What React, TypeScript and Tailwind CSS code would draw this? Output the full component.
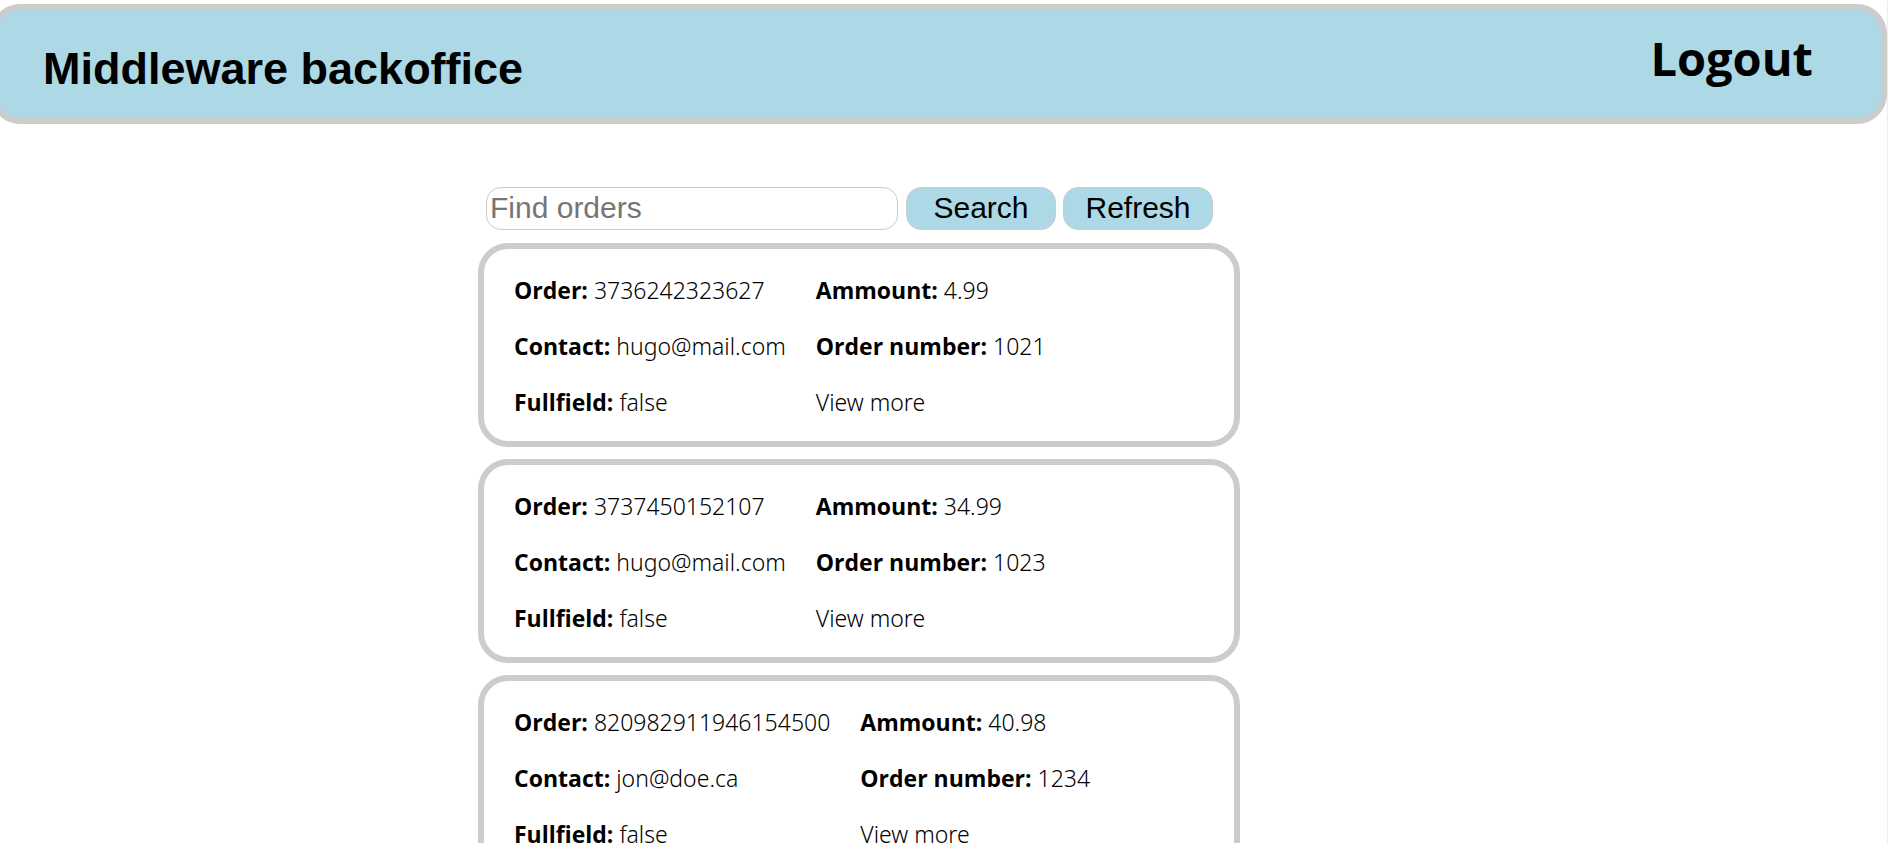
type Order = {
  id: string;
  contact: string;
  fulfilled: boolean;
  amount: string;
  number: string;
};

const orders: Order[] = [
  { id: '3736242323627', contact: 'hugo@mail.com', fulfilled: false, amount: '4.99', number: '1021' },
  { id: '3737450152107', contact: 'hugo@mail.com', fulfilled: false, amount: '34.99', number: '1023' },
  { id: '820982911946154500', contact: 'jon@doe.ca', fulfilled: false, amount: '40.98', number: '1234' },
];

function Field({ label, value }: { label: string; value: string }) {
  return (
    <p>
      <strong className='font-["Open_Sans",sans-serif] font-bold'>{label}:</strong> {value}
    </p>
  );
}

function OrderCard({ order }: { order: Order }) {
  return (
    <li className='flex gap-[30px] rounded-[30px] border-6 border-[#ccc] px-[30px] pt-[13px] pb-[11px] font-["Noto_Sans",sans-serif] text-[23px] leading-[56px] font-light whitespace-nowrap'>
      <div>
        <Field label="Order" value={order.id} />
        <Field label="Contact" value={order.contact} />
        <Field label="Fullfield" value={String(order.fulfilled)} />
      </div>
      <div>
        <Field label="Ammount" value={order.amount} />
        <Field label="Order number" value={order.number} />
        <a href="#order" className="block">View more</a>
      </div>
    </li>
  );
}

const buttonClass =
  'h-[43px] w-[150px] rounded-[15px] border border-[#ccc] bg-[#add8e6] pb-0.5 font-["Liberation_Sans",sans-serif] text-[30px] leading-none';

export default function App() {
  return (
    <div className='min-h-screen overflow-x-hidden border-r border-[#ededed] bg-white pt-1 font-["Open_Sans",sans-serif] text-black'>
      <header className="-ml-2.5 flex h-[120px] items-center justify-between rounded-[30px] border-6 border-[#ccc] bg-[#add8e6] pr-[68px] pl-[47px]">
        <h1 className='pt-2.5 font-["Liberation_Sans",sans-serif] text-[45px] font-bold'>Middleware backoffice</h1>
        <a href="#logout" className="pb-3 text-[47px] leading-none font-bold">Logout</a>
      </header>
      <main className="grid grid-cols-[minmax(0,478fr)_minmax(0,762fr)_minmax(0,647fr)] pt-[63px]">
        <div className="col-start-2">
          <form className="flex pl-2" onSubmit={(e) => e.preventDefault()}>
            <input
              type="text"
              aria-label="Find orders"
              placeholder="Find orders"
              className='mr-2 h-[43px] w-[412px] rounded-[15px] border border-[#ccc] px-[3px] pb-0.5 font-["Liberation_Sans",sans-serif] text-[30px] placeholder:text-[#757575]'
            />
            <button type="submit" className={`${buttonClass} mr-[7px]`}>Search</button>
            <button type="button" className={buttonClass}>Refresh</button>
          </form>
          <ul className="mt-[13px] flex flex-col gap-3">
            {orders.map((order) => (
              <OrderCard key={order.id} order={order} />
            ))}
          </ul>
        </div>
      </main>
    </div>
  );
}
